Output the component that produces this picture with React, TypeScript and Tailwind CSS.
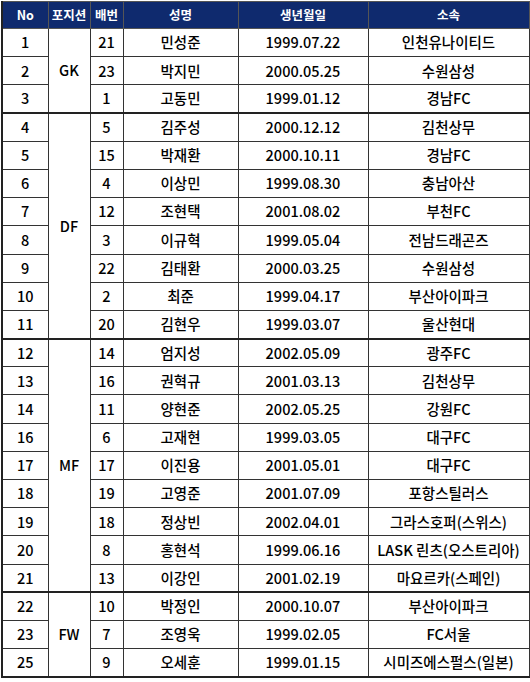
const groups = [
  {
    pos: "GK",
    rows: [
      ["1", "21", "민성준", "1999.07.22", "인천유나이티드"],
      ["2", "23", "박지민", "2000.05.25", "수원삼성"],
      ["3", "1", "고동민", "1999.01.12", "경남FC"],
    ],
  },
  {
    pos: "DF",
    rows: [
      ["4", "5", "김주성", "2000.12.12", "김천상무"],
      ["5", "15", "박재환", "2000.10.11", "경남FC"],
      ["6", "4", "이상민", "1999.08.30", "충남아산"],
      ["7", "12", "조현택", "2001.08.02", "부천FC"],
      ["8", "3", "이규혁", "1999.05.04", "전남드래곤즈"],
      ["9", "22", "김태환", "2000.03.25", "수원삼성"],
      ["10", "2", "최준", "1999.04.17", "부산아이파크"],
      ["11", "20", "김현우", "1999.03.07", "울산현대"],
    ],
  },
  {
    pos: "MF",
    rows: [
      ["12", "14", "엄지성", "2002.05.09", "광주FC"],
      ["13", "16", "권혁규", "2001.03.13", "김천상무"],
      ["14", "11", "양현준", "2002.05.25", "강원FC"],
      ["16", "6", "고재현", "1999.03.05", "대구FC"],
      ["17", "17", "이진용", "2001.05.01", "대구FC"],
      ["18", "19", "고영준", "2001.07.09", "포항스틸러스"],
      ["19", "18", "정상빈", "2002.04.01", "그라스호퍼(스위스)"],
      ["20", "8", "홍현석", "1999.06.16", "LASK 린츠(오스트리아)"],
      ["21", "13", "이강인", "2001.02.19", "마요르카(스페인)"],
    ],
  },
  {
    pos: "FW",
    rows: [
      ["22", "10", "박정인", "2000.10.07", "부산아이파크"],
      ["23", "7", "조영욱", "1999.02.05", "FC서울"],
      ["25", "9", "오세훈", "1999.01.15", "시미즈에스펄스(일본)"],
    ],
  },
];

const cell = "border border-[#333] text-center p-0";

export default function App() {
  return (
    <div className="w-[530px] h-[682px] bg-white pt-[1px] pl-[1px] font-['Noto_Sans_CJK_KR','Noto_Sans',sans-serif] text-black">
      <table className="w-[527px] table-fixed border-collapse border-l-2 border-b-2 border-[#222] text-[14.5px] font-medium leading-none">
        <colgroup>
          <col className="w-[46px]" />
          <col className="w-[42px]" />
          <col className="w-[33px]" />
          <col className="w-[115px]" />
          <col className="w-[130px]" />
          <col className="w-[161px]" />
        </colgroup>
        <thead>
          <tr className="h-[27px] bg-[#0f2a6e] text-white text-[12.5px] font-bold">
            <th className="border border-[#555]">No</th>
            <th className="border border-[#555]">포지션</th>
            <th className="border border-[#555]">배번</th>
            <th className="border border-[#555]">성명</th>
            <th className="border border-[#555]">생년월일</th>
            <th className="border border-[#555]">소속</th>
          </tr>
        </thead>
        {groups.map((g) => (
          <tbody key={g.pos} className="border-b-2 border-[#222]">
            {g.rows.map((r, i) => (
              <tr key={r[0]} className="h-[28.2px]">
                <td className={cell}>{r[0]}</td>
                {i === 0 && (
                  <td className={cell} rowSpan={g.rows.length}>
                    {g.pos}
                  </td>
                )}
                <td className={cell}>{r[1]}</td>
                <td className={cell}>{r[2]}</td>
                <td className={cell}>{r[3]}</td>
                <td className={cell}>{r[4]}</td>
              </tr>
            ))}
          </tbody>
        ))}
      </table>
    </div>
  );
}
